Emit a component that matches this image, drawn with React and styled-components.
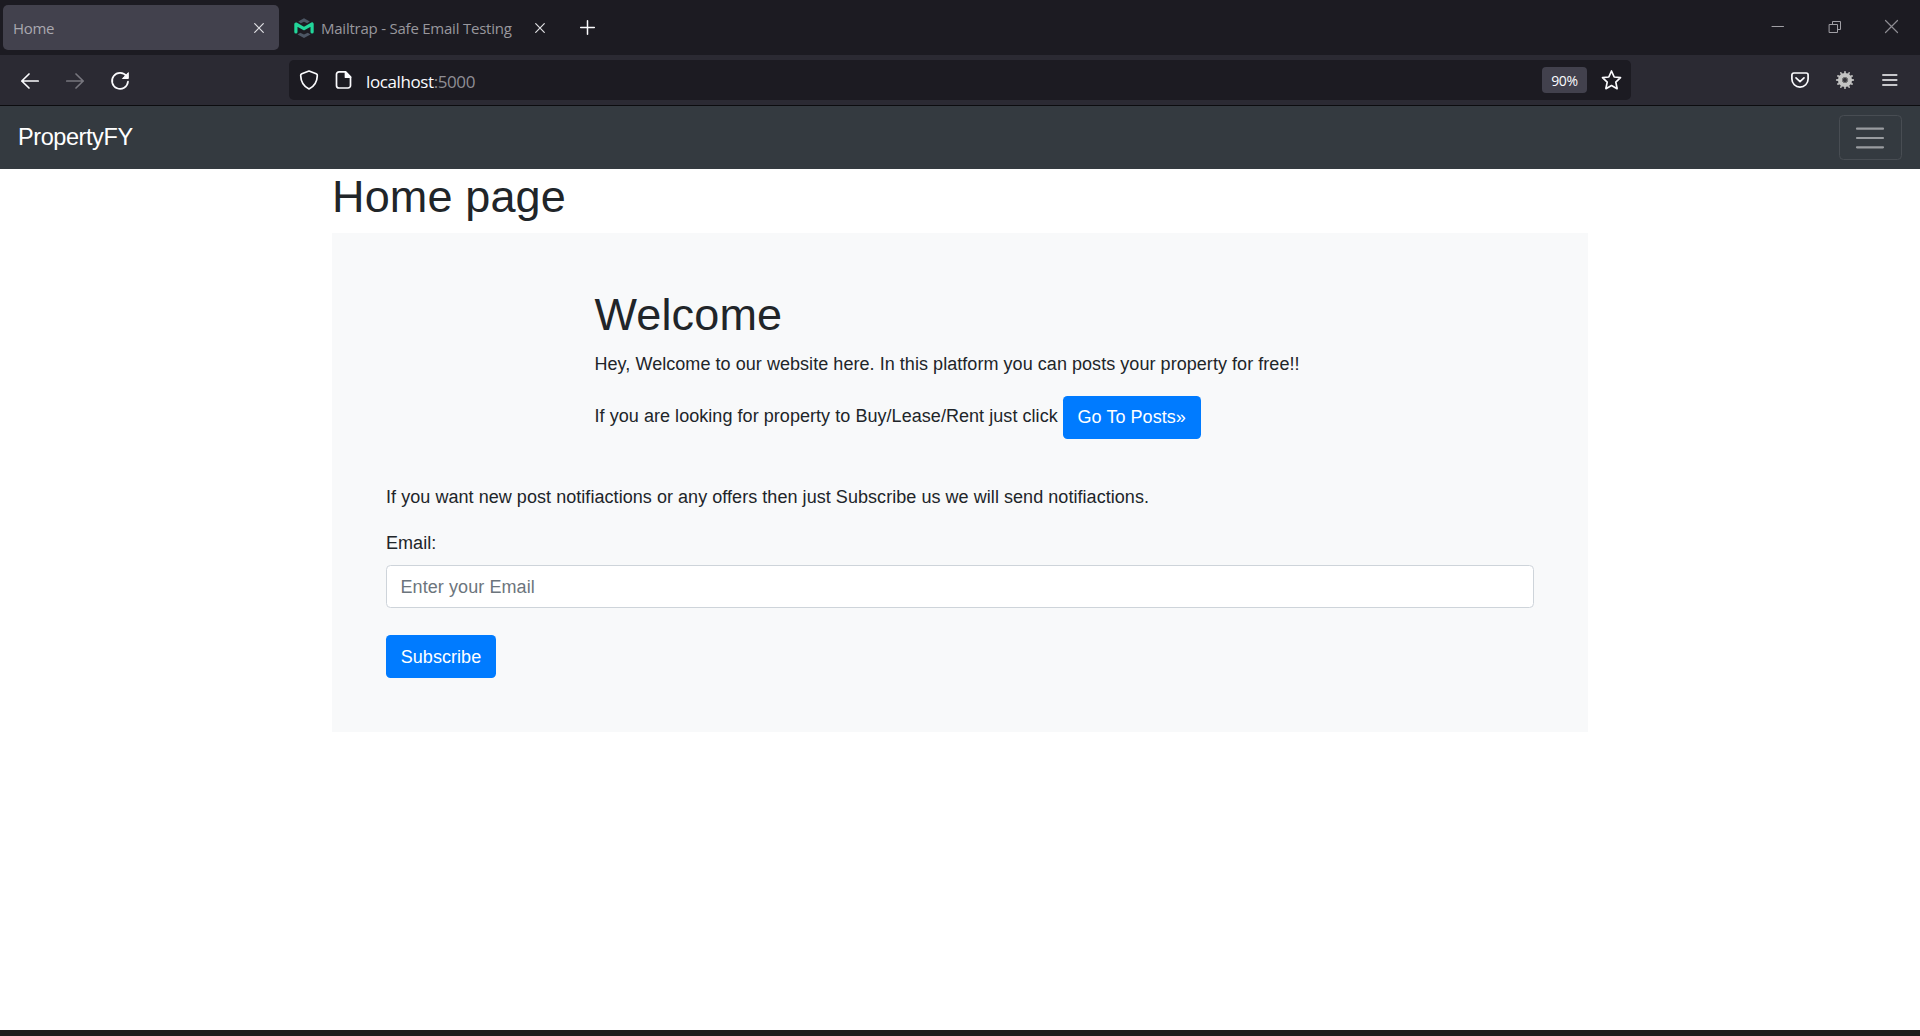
import React from "react";
import styled, { createGlobalStyle } from "styled-components";

const GlobalStyle = createGlobalStyle`
  *, *::before, *::after { box-sizing: border-box; }
  html, body { margin: 0; padding: 0; background: #fff; }
  body { overflow: hidden; }
`;

const uiFont = `"Segoe UI", "Open Sans", "Noto Sans", sans-serif`;

const Window = styled.div`
  display: flex;
  flex-direction: column;
  width: 1920px;
  height: 1036px;
  background: #fff;
`;

/* ---------- browser chrome ---------- */

const TabStrip = styled.div`
  display: flex;
  flex: none;
  height: 55px;
  padding: 5px 0 5px 3px;
  background: #1c1b22;
  font-family: ${uiFont};
`;

const Tab = styled.div`
  display: flex;
  align-items: center;
  width: ${(p) => p.$width}px;
  height: 45px;
  padding: 0 15px 0 ${(p) => (p.$active ? 10 : 15)}px;
  border-radius: 5px;
  background: ${(p) => (p.$active ? "#42414d" : "transparent")};
`;

const TabTitle = styled.span`
  flex: 1;
  margin-left: ${(p) => p.$gap || 0}px;
  padding-top: 1px;
  font-size: 15px;
  line-height: 20px;
  letter-spacing: ${(p) => p.$spacing}px;
  white-space: nowrap;
  color: ${(p) => (p.$active ? "#a9a8af" : "#98979d")};
`;

const Icon = styled.svg`
  display: block;
  flex: none;
  overflow: visible;
  fill: none;
  stroke: ${(p) => p.$color || "#fbfbfe"};
  stroke-width: ${(p) => p.$stroke || 1.7};
  stroke-linecap: round;
  stroke-linejoin: round;
`;

const NewTab = styled.div`
  display: flex;
  align-items: center;
  margin-left: 20px;
`;

const WindowControls = styled.div`
  display: flex;
  align-items: center;
  gap: 44px;
  margin-left: auto;
  margin-right: 22px;
  height: 43px;
`;

const Toolbar = styled.div`
  display: flex;
  align-items: center;
  flex: none;
  height: 51px;
  padding: 0 23px 0 20px;
  background: #2b2a33;
  border-bottom: 1px solid #0c0c0f;
  font-family: ${uiFont};
`;

const NavButtons = styled.div`
  display: flex;
  align-items: center;
  gap: 25px;
  width: 269px;
  padding-top: 1px;
`;

const UrlBar = styled.div`
  display: flex;
  align-items: center;
  width: 1342px;
  height: 40px;
  padding: 0 9px 0 10px;
  border-radius: 5px;
  background: #1c1b22;
`;

const PageIconSlot = styled.span`
  margin: 0 14px 0 15px;
`;

const Address = styled.span`
  flex: 1;
  padding-top: 4px;
  font-size: 17px;
  line-height: 22px;
  letter-spacing: -0.4px;
  color: #fbfbfe;
`;

const Port = styled.span`
  color: #8f8e95;
`;

const ZoomBadge = styled.span`
  width: 45px;
  height: 26px;
  margin-right: 14px;
  border-radius: 4px;
  background: #42414d;
  color: #fbfbfe;
  font-size: 14px;
  line-height: 27px;
  letter-spacing: -0.3px;
  text-align: center;
`;

const ToolbarActions = styled.div`
  display: flex;
  align-items: center;
  gap: 27px;
  margin-left: auto;
`;

/* ---------- web page ---------- */

const Page = styled.div`
  flex: 1;
  font-family: Arial, "Liberation Sans", sans-serif;
  font-size: 18px;
  line-height: 27px;
  letter-spacing: 0.05px;
  color: #212529;
`;

const Navbar = styled.nav`
  display: flex;
  align-items: center;
  justify-content: space-between;
  height: 63px;
  padding: 0 18px;
  background: #343a40;
`;

const Brand = styled.a`
  padding-bottom: 1px;
  font-size: 23.5px;
  line-height: 34px;
  letter-spacing: -0.42px;
  color: #fff;
`;

const Toggler = styled.button`
  display: flex;
  align-items: center;
  justify-content: center;
  width: 63px;
  height: 45px;
  padding: 0 2px 0 0;
  background: transparent;
  border: 1px solid #484d53;
  border-radius: 4.5px;
`;

const Container = styled.main`
  width: 1256px;
  margin: 0 auto;
  padding-top: 1px;
`;

const Heading = styled.h1`
  margin: 0 0 9px;
  font-size: 45px;
  font-weight: 400;
  line-height: 54px;
  letter-spacing: 0.14px;
`;

const Jumbotron = styled.section`
  height: 499px;
  padding: 55px 54px 54px;
  background: #f8f9fa;
`;

const Intro = styled.div`
  width: 730px;
  margin-left: 208.5px;
`;

const Paragraph = styled.p`
  margin: 0 0 ${(p) => (p.$gap === undefined ? 18 : p.$gap)}px;
`;

const ActionRow = styled.div`
  display: flex;
  align-items: center;
  gap: 5px;
  margin-bottom: 45px;
`;

const Button = styled.button`
  height: 43px;
  width: ${(p) => p.$width}px;
  padding: ${(p) => p.$drop || 0}px 0 0;
  border: 0;
  border-radius: 4.5px;
  background: #007bff;
  color: #fff;
  font: inherit;
  letter-spacing: inherit;
  white-space: nowrap;
`;

const Label = styled.label`
  display: block;
  padding-top: 1px;
  margin-bottom: 8px;
`;

const Input = styled.input`
  display: block;
  width: 100%;
  height: 43px;
  margin-bottom: 27px;
  padding: 1px 13.5px 0;
  border: 1px solid #ced4da;
  border-radius: 4.5px;
  background: #fff;
  font: inherit;
  letter-spacing: 0.08px;
  &::placeholder { color: #6c757d; opacity: 1; }
`;

const Taskbar = styled.div`
  flex: none;
  height: 6px;
  background: #1b1e1d;
`;

const CloseIcon = () => (
  <Icon width="10" height="10" viewBox="0 0 10 10" $stroke={1.2} $color="#e0e0e4">
    <path d="M.7.7l8.6 8.6M9.3.7L.7 9.3" />
  </Icon>
);

const MailtrapLogo = () => (
  <Icon width="20" height="20" viewBox="0 0 20 20" $color="none">
    <path d="M4.200 3.600L10 .3l5.800 3.300-2.600 1.600L10 3.700 6.800 5.200z" fill="#4c5664" />
    <path d="M3.500 16.500l2.700-1.700L10 16.500l3.800-1.700 2.700 1.700L10 20z" fill="#4c5664" />
    <path d="M1.900 14V6L10 10.600 18.100 6V14" stroke="#22d69a" strokeWidth="3.200" />
  </Icon>
);

const teeth = Array.from({ length: 12 }, (_, i) => (i * 360) / 12);

const GearIcon = () => (
  <Icon width="18" height="18" viewBox="-8 -9 18 18" $stroke={1.8} $color="#b4b4b4">
    {teeth.map((a) => (
      <path key={a} d="M0-6V-8.200" transform={`rotate(${a})`} />
    ))}
    <circle r="4.900" stroke="#c4c4c4" strokeWidth="4.400" />
    <circle r="2.600" fill="#35343b" stroke="#777" strokeWidth="1" />
  </Icon>
);

export default function App() {
  return (
    <Window>
      <GlobalStyle />
      <TabStrip>
        <Tab $active $width={276}>
          <TabTitle $active $spacing={-0.3}>Home</TabTitle>
          <CloseIcon />
        </Tab>
        <Tab $width={281}>
          <MailtrapLogo />
          <TabTitle $gap={7} $spacing={-0.23}>Mailtrap - Safe Email Testing</TabTitle>
          <CloseIcon />
        </Tab>
        <NewTab>
          <Icon width="15" height="15" viewBox="0 0 15 15" $stroke={1.5}>
            <path d="M7.500.7v13.600M.7 7.500h13.600" />
          </Icon>
        </NewTab>
        <WindowControls>
          <Icon width="12" height="12" viewBox="0 0 12 12" $stroke={1} $color="#a09fa5">
            <path d="M-1 5.500h11.500" />
          </Icon>
          <Icon width="12" height="12" viewBox="0 0 12 12" $stroke={1} $color="#a09fa5">
            <path d="M.5 3.500h8v8h-8zM3.500 3.500v-3h8v8h-3" />
          </Icon>
          <Icon width="13" height="13" viewBox="0 0 13 13" $stroke={1.2} $color="#8d8c92">
            <path d="M.5.5l12 12M12.500.5l-12 12" />
          </Icon>
        </WindowControls>
      </TabStrip>

      <Toolbar>
        <NavButtons>
          <Icon width="20" height="18" viewBox="0 0 20 18">
            <path d="M18.200 9H1.800M9 2L1.800 9 9 16" />
          </Icon>
          <Icon width="20" height="18" viewBox="0 0 20 18" $color="#77767e">
            <path d="M1.800 9h16.400M11 2l7.200 7L11 16" />
          </Icon>
          <Icon width="20" height="18" viewBox="0 0 20 18">
            <path d="M16.500 4.100A8 8 0 1 0 18 9.600" />
            <path d="M18.300 1v5.500h-5.500z" fill="#fbfbfe" strokeWidth="1" />
          </Icon>
        </NavButtons>
        <UrlBar>
          <Icon width="20" height="20" viewBox="0 0 20 20">
            <path d="M10 1L17.200 3.800Q18.500 4.300 18.300 5.700 18 15 10 19 2 15 1.700 5.700 1.500 4.300 2.800 3.800z" />
          </Icon>
          <PageIconSlot>
            <Icon width="18" height="20" viewBox="-1 0 18 20">
              <path d="M10.500 1.800H4a2.500 2.500 0 0 0-2.500 2.500V15.500A2.500 2.500 0 0 0 4 18h9a2.500 2.500 0 0 0 2.500-2.500V7z" />
              <path d="M10.500 2v5.200H15.500z" fill="#fbfbfe" />
            </Icon>
          </PageIconSlot>
          <Address>localhost<Port>:5000</Port></Address>
          <ZoomBadge>90%</ZoomBadge>
          <Icon width="21" height="20" viewBox="0 0 21 20">
            <path d="M10.500 1l2.700 6 6.300.7-4.700 4.400 1.300 6.600-5.600-3.200-5.600 3.200 1.300-6.600L1.500 7.700l6.300-.7z" />
          </Icon>
        </UrlBar>
        <ToolbarActions>
          <Icon width="18" height="16" viewBox="1 0 18 16">
            <path d="M2.800 1h12.400A1.900 1.900 0 0 1 17.100 2.900V7a8.100 8.100 0 0 1-16.200 0V2.900A1.900 1.900 0 0 1 2.800 1z" />
            <path d="M5 5.800l4 3.800 4-3.800" />
          </Icon>
          <GearIcon />
          <Icon width="15" height="12" viewBox="0 0 15 12" $stroke={1.5}>
            <path d="M.8 1h14M.8 6h14M.8 11h14" />
          </Icon>
        </ToolbarActions>
      </Toolbar>

      <Page>
        <Navbar>
          <Brand>PropertyFY</Brand>
          <Toggler aria-label="Toggle navigation">
            <Icon width="28" height="22" viewBox="0 0 28 22" $stroke={2.2} $color="#999ca0">
              <path d="M1 1.700h26M1 11h26M1 20.300h26" />
            </Icon>
          </Toggler>
        </Navbar>
        <Container>
          <Heading>Home page</Heading>
          <Jumbotron>
            <Intro>
              <Heading>Welcome</Heading>
              <Paragraph>
                Hey, Welcome to our website here. In this platform you can posts your property for free!!
              </Paragraph>
              <ActionRow>
                <Paragraph $gap={2}>If you are looking for property to Buy/Lease/Rent just click</Paragraph>
                <Button $width={138}>Go To Posts»</Button>
              </ActionRow>
            </Intro>
            <Paragraph>
              If you want new post notifiactions or any offers then just Subscribe us we will send notifiactions.
            </Paragraph>
            <Label htmlFor="email">Email:</Label>
            <Input id="email" placeholder="Enter your Email" />
            <Button $width={110} $drop={2}>Subscribe</Button>
          </Jumbotron>
        </Container>
      </Page>
      <Taskbar />
    </Window>
  );
}
